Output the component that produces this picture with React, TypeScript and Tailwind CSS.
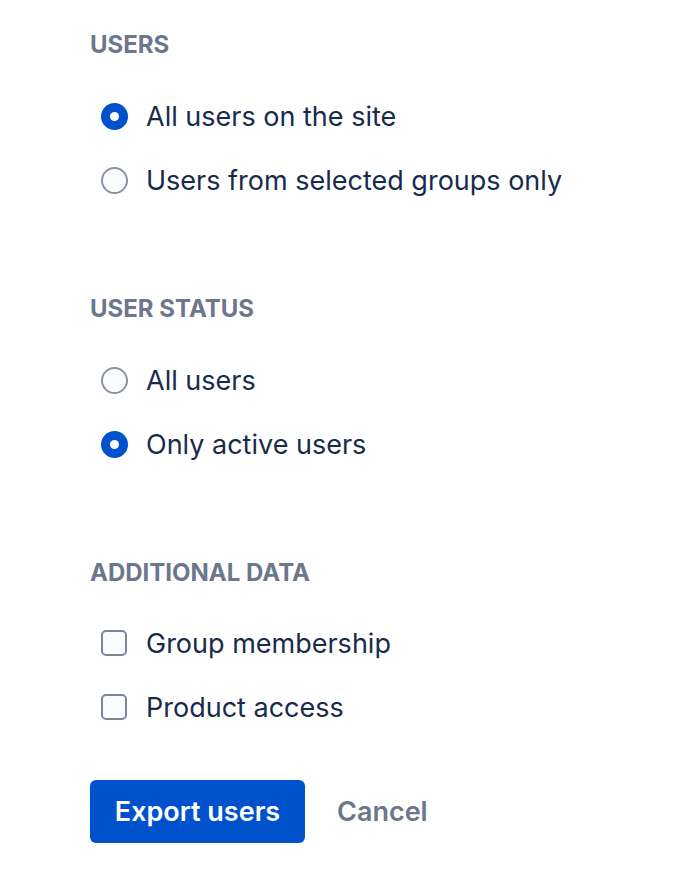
import { useState } from 'react';

function Radio({ checked, label, onClick }: { checked: boolean; label: string; onClick: () => void }) {
  return (
    <button type="button" onClick={onClick} className="flex h-16 items-center text-left">
      <span className="ml-[10px] flex h-[28px] w-[28px] items-center justify-center">
        {checked ? (
          <span className="flex h-[27px] w-[27px] items-center justify-center rounded-full bg-[#0052cc]">
            <span className="h-[9px] w-[9px] rounded-full bg-white" />
          </span>
        ) : (
          <span className="h-[27px] w-[27px] rounded-full border-2 border-[#8993a4] bg-[#fafbfc]" />
        )}
      </span>
      <span className="ml-[18px] pt-[2px] text-[27px] leading-8 text-[#172b4d]">{label}</span>
    </button>
  );
}

function Checkbox({ checked, label, onClick }: { checked: boolean; label: string; onClick: () => void }) {
  return (
    <button type="button" onClick={onClick} className="flex h-16 items-center text-left">
      <span
        className={`ml-[11px] h-[26px] w-[26px] rounded-[5px] border-2 ${
          checked ? 'border-[#0052cc] bg-[#0052cc]' : 'border-[#7a869a] bg-[#fafbfc]'
        }`}
      />
      <span className="ml-[19px] pt-[2px] text-[27px] leading-8 text-[#172b4d]">{label}</span>
    </button>
  );
}

function Heading({ children }: { children: string }) {
  return <h3 className="h-8 text-[24px] font-bold leading-8 text-[#6b778c]">{children}</h3>;
}

export default function App() {
  const [scope, setScope] = useState<'all' | 'groups'>('all');
  const [status, setStatus] = useState<'all' | 'active'>('active');
  const [groups, setGroups] = useState(false);
  const [access, setAccess] = useState(false);

  return (
    <div
      className="min-h-screen bg-white pl-[90px] pt-[29px]"
      style={{ fontFamily: 'Inter, "Noto Sans", sans-serif' }}
    >
      {/* Users */}
      <Heading>USERS</Heading>
      <div className="mt-[23px] flex flex-col">
        <Radio checked={scope === 'all'} label="All users on the site" onClick={() => setScope('all')} />
        <Radio checked={scope === 'groups'} label="Users from selected groups only" onClick={() => setScope('groups')} />
      </div>

      {/* User status */}
      <div className="mt-[81px]">
        <Heading>USER STATUS</Heading>
      </div>
      <div className="mt-[23px] flex flex-col">
        <Radio checked={status === 'all'} label="All users" onClick={() => setStatus('all')} />
        <Radio checked={status === 'active'} label="Only active users" onClick={() => setStatus('active')} />
      </div>

      {/* Additional data */}
      <div className="mt-[81px]">
        <Heading>ADDITIONAL DATA</Heading>
      </div>
      <div className="mt-[22px] flex flex-col">
        <Checkbox checked={groups} label="Group membership" onClick={() => setGroups(!groups)} />
        <Checkbox checked={access} label="Product access" onClick={() => setAccess(!access)} />
      </div>

      {/* Actions */}
      <div className="mt-[41px] flex items-center">
        <button
          type="button"
          className="h-[63px] w-[215px] rounded-[6px] bg-[#0052cc] pt-[2px] text-[27px] font-semibold text-white"
        >
          Export users
        </button>
        <button type="button" className="ml-[32px] pt-[2px] text-[27px] font-semibold text-[#6b778c]">
          Cancel
        </button>
      </div>
    </div>
  );
}
